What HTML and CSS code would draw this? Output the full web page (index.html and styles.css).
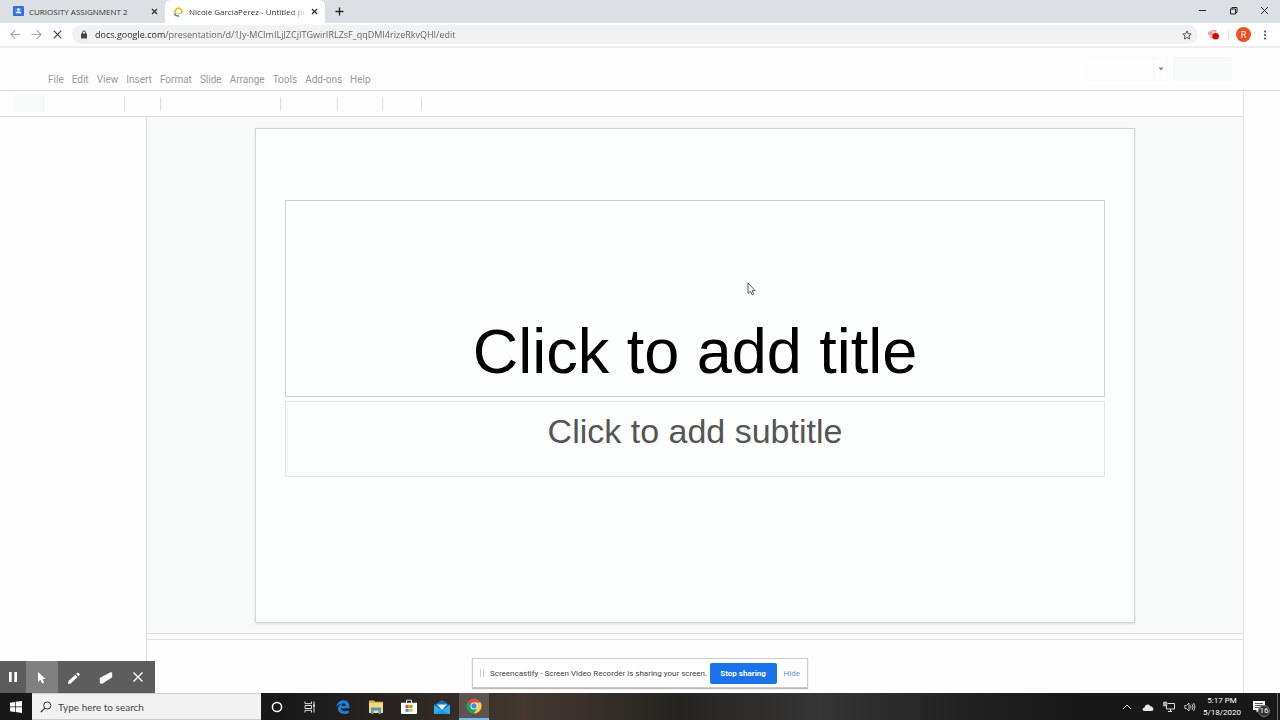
FILE: index.html
```
<!DOCTYPE html>
<html lang="en">
<head>
<meta charset="utf-8">
<title>Nicole GarciaPerez - Untitled presentation</title>
<link rel="stylesheet" href="styles.css">
</head>
<body>
<header class="tabstrip">
  <div class="tab">
    <svg class="favicon" viewBox="0 0 11 11"><rect width="11" height="10" y="0" rx="1" fill="#2f6fe0"/><rect x="2" y="2" width="7" height="6" fill="#4b86ee"/><circle cx="5.500" cy="3.600" r="1.300" fill="#fff"/><path d="M2.800 7.300c0-2.500 5.400-2.500 5.400 0z" fill="#fff"/></svg>
    <span class="tab-name">CURIOSITY ASSIGNMENT 2</span>
    <button class="tab-close" aria-label="Close tab"><svg viewBox="0 0 7 7"><path d="M1 1l5 5M6 1l-5 5" stroke="#333" stroke-width="1.300"/></svg></button>
  </div>
  <div class="tab tab-active">
    <svg class="favicon" viewBox="0 0 11 11"><path d="M3 7.500A3.200 3.200 0 1 1 8 7.500" fill="none" stroke="#f2b92c" stroke-width="1.800"/><path d="M3.500 6.800h4.500v1.700h-4.500z" fill="#f6cf63"/><path d="M1.200 7.500c.8 1.900 2.500 2.700 5 2.500" fill="none" stroke="#4a8ad4" stroke-width="1.600"/></svg>
    <span class="tab-name tab-fade">Nicole GarciaPerez - Untitled pre</span>
    <button class="tab-close" aria-label="Close tab"><svg viewBox="0 0 7 7"><path d="M1 1l5 5M6 1l-5 5" stroke="#333" stroke-width="1.300"/></svg></button>
  </div>
  <button class="new-tab" aria-label="New tab"><svg viewBox="0 0 9 9"><path d="M4.500 .5v8M.5 4.500h8" stroke="#222" stroke-width="1.300"/></svg></button>
  <div class="window-buttons">
    <button aria-label="Minimize"><svg viewBox="0 0 9 9"><path d="M1 4.500h7" stroke="#222"/></svg></button>
    <button aria-label="Restore"><svg viewBox="0 0 9 9"><path d="M1.500 3h5v5h-5zM3 3V1.500h5v5H6.500" fill="none" stroke="#222"/></svg></button>
    <button aria-label="Close"><svg viewBox="0 0 9 9"><path d="M1 1l7 7M8 1L1 8" stroke="#222"/></svg></button>
  </div>
</header>
<nav class="addressbar">
  <button class="nav-button" aria-label="Back"><svg viewBox="0 0 11 11"><path d="M10.500 5.500H1M5.200 1.200L1 5.500l4.200 4.300" fill="none" stroke="#aaa" stroke-width="1.200"/></svg></button>
  <button class="nav-button" aria-label="Forward"><svg viewBox="0 0 11 11"><path d="M.5 5.500H10M5.800 1.200L10 5.500 5.800 9.800" fill="none" stroke="#aaa" stroke-width="1.200"/></svg></button>
  <button class="nav-button" aria-label="Stop loading"><svg viewBox="0 0 11 11"><path d="M1.700 1.700l7.600 7.600M9.300 1.700L1.700 9.300" stroke="#444" stroke-width="1.200"/></svg></button>
  <div class="omnibox">
    <svg class="lock" viewBox="0 0 8 9"><rect x="1" y="3.500" width="6" height="5" rx=".6" fill="#444"/><path d="M2.500 4V2.400a1.500 1.500 0 0 1 3 0V4" fill="none" stroke="#444"/></svg>
    <input class="url" type="text" aria-label="Address" value="docs.google.com/presentation/d/1Jy-MCImILjJZCjITGwirIRLZsF_qqDMI4rizeRkvQHI/edit">
    <button class="star" aria-label="Bookmark"><svg viewBox="0 0 10 10"><path d="M5 .9l1.200 2.800 3 .3-2.300 2 .7 3L5 7.400 2.400 9l.7-3L.8 4l3-.3z" fill="none" stroke="#444" stroke-width=".9"/></svg></button>
  </div>
  <button class="extension" aria-label="Screencastify"><svg viewBox="0 0 12 12"><rect x="1" y="3" width="4" height="4" rx="1" fill="#f0a0a0"/><path d="M4 2.500h4v3H5v3H2.500" fill="none" stroke="#ee9a9a" stroke-width="1.300"/><circle cx="8" cy="7.600" r="3" fill="#e60000"/></svg></button>
  <span class="extension-rule"></span>
  <button class="avatar">R</button>
  <button class="more" aria-label="More"><svg viewBox="0 0 4 10"><circle cx="2" cy="1.500" r="1" fill="#444"/><circle cx="2" cy="5" r="1" fill="#444"/><circle cx="2" cy="8.500" r="1" fill="#444"/></svg></button>
</nav>
<section class="doc-header">
  <div class="menus">
    <button>File</button><button>Edit</button><button>View</button><button>Insert</button><button>Format</button><button>Slide</button><button>Arrange</button><button>Tools</button><button>Add-ons</button><button>Help</button>
  </div>
  <div class="doc-actions">
    <button class="present" aria-label="Present"></button>
    <button class="present-options" aria-label="Present options"><svg viewBox="0 0 6 4"><path d="M.5 .5h5L3 3.500z" fill="#888"/></svg></button>
    <button class="share" aria-label="Share"></button>
  </div>
</section>
<div class="workspace">
  <div class="editor">
    <div class="toolbar">
      <span class="group group-new"><button class="new-slide" aria-label="New slide"></button></span>
      <span class="group group-zoom"></span>
      <span class="group group-insert"></span>
      <span class="group group-layout"></span>
      <span class="group group-theme"></span>
      <span class="group group-motion"></span>
    </div>
    <div class="panes">
      <aside class="filmstrip"></aside>
      <div class="stage">
        <main class="canvas">
          <article class="slide">
            <h1 class="slide-title">Click to add title</h1>
            <h2 class="slide-subtitle">Click to add subtitle</h2>
          </article>
        </main>
        <div class="splitter"></div>
        <div class="notes"></div>
      </div>
    </div>
  </div>
  <aside class="side-panel"></aside>

  <div class="record-tools">
    <button aria-label="Pause"><svg viewBox="0 0 14 14"><path d="M3 2h2.700v10H3zM8.300 2H11v10H8.300z" fill="#fff"/></svg></button>
    <button class="selected" aria-label="Mouse"><svg viewBox="0 0 14 14"><path d="M3 2v10l2.400-2.200L7.200 13.500l1.900-.9-1.700-3.500h3.200z" fill="#fff"/></svg></button>
    <button aria-label="Pen"><svg viewBox="0 0 14 14"><path d="M1 14l.5-3 6.800-6.300 2.200 2.200-6.700 6.600zM9.200 4l1.600-1.500 2.200 2.100-1.600 1.600z" fill="#fff"/></svg></button>
    <button aria-label="Eraser"><svg viewBox="0 0 14 14"><path d="M.8 8L11.500 2.200l1.700.3v4.800L2.800 14 .8 13z" fill="#fff"/></svg></button>
    <button aria-label="Close tools"><svg viewBox="0 0 14 14"><path d="M2.500 2.500l9 9M11.500 2.500l-9 9" stroke="#fff" stroke-width="1.400"/></svg></button>
  </div>
  <div class="share-notice">
    <span class="grip"></span>
    <span class="share-text">Screencastify - Screen Video Recorder is sharing your screen.</span>
    <button class="stop">Stop sharing</button>
    <a class="hide" href="#">Hide</a>
  </div>
</div>
<footer class="taskbar">
  <button class="start" aria-label="Start"><svg viewBox="0 0 12 12"><path d="M0 1.700l5-.8v4.700H0zM5.700 .8L12 0v5.600H5.700zM0 6.300h5V11l-5-.8zM5.700 6.300H12V12l-6.300-.9z" fill="#fff"/></svg></button>
  <div class="search">
    <label for="search" aria-label="Search"><svg viewBox="0 0 12 12"><circle cx="7.300" cy="4.500" r="3.600" fill="none" stroke="#333"/><path d="M4.800 7.200L.8 11.200" stroke="#333" stroke-width="1.200"/></svg></label>
    <input id="search" type="text" placeholder="Type here to search">
  </div>
  <div class="apps">
    <button aria-label="Cortana"><svg viewBox="0 0 16 16"><circle cx="8" cy="8" r="4.600" fill="none" stroke="#fff" stroke-width="1.500"/></svg></button>
    <button aria-label="Task view"><svg viewBox="0 0 16 16"><path d="M3 2.500v2.200h6.500V2.500M3 13.500v-2.200h6.500v2.200M3 6.500h6.500v3H3zM12 2.500v11" fill="none" stroke="#ddd"/><path d="M11 5.500h2v2h-2z" fill="#ddd"/></svg></button>
    <button aria-label="Edge"><svg viewBox="0 0 16 16"><path d="M1.500 8C2 3.800 4.800 1.200 8.500 1.200c4 0 6 3 6 6.500v1.500H6c.2 2.200 2 3 3.900 3 1.500 0 2.700-.4 3.800-1V14c-1.300.7-2.800 1-4.500 1C5.500 15 3 13 3 9.800 3 7.600 4.200 6 6 5c-2 .3-3.500 1.300-4.500 3zM6.200 6.800h4.600c0-1.600-.8-2.500-2.200-2.500S6.400 5.300 6.200 6.800z" fill="#1583dc"/></svg></button>
    <button aria-label="File Explorer"><svg viewBox="0 0 16 16"><path d="M1 1.500h5l1 1.300h8V14H1z" fill="#e5b548"/><path d="M1 4h14v10H1z" fill="#f8da7c"/><path d="M3 15V8.500h10V15h-2.500v-3.500h-5V15z" fill="#4e9bc4"/></svg></button>
    <button aria-label="Store"><svg viewBox="0 0 16 16"><path d="M5.500 4V1.200h5V4" fill="none" stroke="#ddd"/><path d="M0 3.700h16V14q0 1-1 1H1q-1 0-1-1z" fill="#fff"/><path d="M4.500 5.800h3.200V9H4.500z" fill="#e8502a"/><path d="M8.300 5.800h3.200V9H8.300z" fill="#7db928"/><path d="M4.500 9.700h3.200v3.100H4.500z" fill="#2a9fe0"/><path d="M8.300 9.700h3.200v3.100H8.300z" fill="#f5b81c"/></svg></button>
    <button aria-label="Mail"><svg viewBox="0 0 16 16"><path d="M0 6l8-5 8 5v9H0z" fill="#1370bd"/><path d="M0 6l8 5.500L16 6v9H0z" fill="#38aeea"/><path d="M3 5.500h10L8 11z" fill="#e5f2fa"/><path d="M0 15l8-4.500L16 15z" fill="#239ae0"/></svg></button>
    <button class="running" aria-label="Chrome"><svg viewBox="0 0 16 16"><circle cx="8" cy="8" r="7.500" fill="#dd4b3e"/><path d="M1.500 4.250A7.500 7.500 0 0 0 8 15.500l3.300-5.600L8 8z" fill="#1da462"/><path d="M8 15.500A7.500 7.500 0 0 0 14.600 4.400H8V8l3.300 2z" fill="#fdd043"/><circle cx="8" cy="8" r="3.500" fill="#fff"/><circle cx="8" cy="8" r="2.700" fill="#4a87ee"/></svg></button>
  </div>
  <div class="tray">
    <button aria-label="Hidden icons"><svg viewBox="0 0 12 12"><path d="M2 8l4-4 4 4" fill="none" stroke="#ddd"/></svg></button>
    <button aria-label="OneDrive"><svg viewBox="0 0 12 12"><path d="M2.500 10C-.3 10 .2 6.500 2.500 6.400 3 3 7.300 2.500 8.300 5.300c3-.2 4.500 4.700 1.200 4.700z" fill="#e6e6e6"/></svg></button>
    <button aria-label="Network"><svg viewBox="0 0 12 12"><path d="M4.500 2.500h7v5.500H3.500V5M5 10.500h4M7.500 8v2.500" fill="none" stroke="#ddd"/><path d="M.5 1h3.300v4H.5z" fill="#aaa" stroke="#ddd" stroke-width=".6"/></svg></button>
    <button aria-label="Volume"><svg viewBox="0 0 12 12"><path d="M.8 4.500h1.700L5 2v8L2.500 7.500H.8z" fill="none" stroke="#ddd" stroke-width=".9"/><path d="M6.500 4.500q1 1.500 0 3M8 3.200q2 2.800 0 5.600M9.600 2q2.800 4 0 8" fill="none" stroke="#ddd" stroke-width=".9"/></svg></button>
  </div>
  <time class="clock"><span>5:17 PM</span><span>5/18/2020</span></time>
  <button class="alerts" aria-label="Notifications"><svg viewBox="0 0 12 12"><path d="M0 0h12v9H6L3.500 11.500V9H0z" fill="#fff"/><path d="M2 2.500h8M2 4.500h8M2 6.500h5" stroke="#333" stroke-width=".8"/></svg><span class="badge">16</span></button>
  <span class="show-desktop"></span>
</footer>
<svg class="pointer" viewBox="0 0 9 14"><path d="M1 1v10.500l2.500-2.300 1.700 3.700 1.500-.7L5.100 8.600h3z" fill="#fff" stroke="#333" stroke-width=".8"/></svg>
</body>
</html>
```
FILE: styles.css
```
* { box-sizing: border-box; }
body {
  margin: 0;
  min-height: 100vh;
  display: flex;
  flex-direction: column;
  position: relative;
  background: #fefefe;
  font-family: "Open Sans", "Noto Sans", sans-serif;
  font-size: 9px;
  color: #444;
}
button {
  display: flex;
  align-items: center;
  justify-content: center;
  padding: 0;
  border: 0;
  background: none;
  font: inherit;
  color: inherit;
}
input { min-width: 0; padding: 0; border: 0; outline: 0; background: none; font: inherit; }
svg { display: block; flex: none; }

.tabstrip { display: flex; height: 23px; background: #dcdfe4; font-size: 8px; }
.tab { display: flex; align-items: center; width: 165px; padding: 0 7px 0 13px; color: #333; }
.tab-active { width: 160px; padding-left: 8px; border-radius: 6px 6px 0 0; background: #fff; }
.favicon { width: 11px; height: 11px; margin-right: 5px; }
.tab-name { flex: 1; min-width: 0; white-space: nowrap; }
.tab-fade { mask-image: linear-gradient(to right, #000 85%, rgba(0, 0, 0, 0.2)); }
.tab-close { width: 8px; margin-left: 6px; }
.tab-close svg { width: 7px; height: 7px; }
.new-tab { width: 28px; }
.new-tab svg { width: 9px; height: 9px; }
.window-buttons { display: flex; margin-left: auto; }
.window-buttons button { width: 31px; height: 20px; }
.window-buttons svg { width: 9px; height: 9px; }

.addressbar { display: flex; align-items: center; height: 25px; padding: 0 8px; border-bottom: 2px solid #eee; background: #fff; }
.nav-button { width: 21px; height: 20px; padding-right: 7px; }
.nav-button svg { width: 11px; height: 11px; }
.omnibox { display: flex; flex: 1; align-items: center; height: 19px; margin-left: 1px; padding: 0 6px 0 8px; border-radius: 10px; background: #f1f3f3; }
.lock { width: 8px; height: 9px; margin-right: 7px; }
.url {
  flex: 1;
  background: linear-gradient(to right, #222 70px, #5c6062 70px);
  background-clip: text;
  -webkit-text-fill-color: transparent;
}
.star svg { width: 10px; height: 10px; }
.extension { margin-left: 9px; }
.extension svg { width: 13px; height: 13px; }
.extension-rule { width: 1px; height: 10px; margin: 0 7px 0 8px; background: #ddd; }
.avatar { width: 15px; height: 15px; border-radius: 50%; background: #ee4f1c; color: #fff; font-family: Roboto, sans-serif; font-size: 9px; }
.more { width: 14px; margin-left: 7px; }
.more svg { width: 4px; height: 10px; }

.doc-header { display: flex; justify-content: space-between; height: 43px; padding: 0 48px 0 48px; border-bottom: 1px solid #dcdcdc; }
.menus { display: flex; gap: 8px; align-self: flex-end; margin-bottom: 4px; font-family: Roboto, sans-serif; font-size: 10px; line-height: 12px; color: #999; }
.doc-actions { display: flex; align-items: center; height: 42px; }
.present, .present-options { height: 24px; border: 1px solid #fafafa; }
.present { width: 68px; }
.present-options { width: 14px; }
.present-options svg { width: 6px; height: 4px; }
.share { width: 59px; height: 24px; margin-left: 5px; border-radius: 2px; background: #f8f9f9; }

.workspace { display: flex; flex: 1; position: relative; }
.editor { display: flex; flex: 1; flex-direction: column; min-width: 0; }
.side-panel { width: 37px; border-left: 1px solid #e6e6e6; }
.toolbar { display: flex; align-items: center; height: 26px; border-bottom: 1px solid #dcdcdc; }
.group { height: 14px; border-right: 1px solid #ddd; }
.group-new { display: flex; align-items: center; width: 125px; padding-left: 15px; }
.new-slide { width: 30px; height: 17px; background: #f8f9f9; }
.group-zoom { width: 36px; }
.group-insert { width: 120px; }
.group-layout { width: 57px; }
.group-theme { width: 45px; }
.group-motion { width: 39px; }
.panes { display: flex; flex: 1; }
.filmstrip { width: 147px; border-right: 1px solid #dcdcdc; }
.stage { display: flex; flex: 1; flex-direction: column; }
.canvas { padding: 11px 108px 10px; background: #f8f9f9; }
.slide {
  display: flex;
  flex-direction: column;
  gap: 4px;
  aspect-ratio: 16 / 9;
  padding: 71px 29px 0;
  border: 1px solid #d4d6d6;
  background: #fdfefe;
  box-shadow: 0 1px 2px #ddd;
  font-family: "Liberation Sans", Arial, sans-serif;
  text-align: center;
}
.slide-title, .slide-subtitle { margin: 0; font-weight: 400; }
.slide-title { display: flex; align-items: flex-end; justify-content: center; height: 197px; padding-bottom: 9px; border: 1px solid #d0d0d0; font-size: 63px; line-height: 72px; color: #000; }
.slide-subtitle { height: 76px; padding-top: 9px; border: 1px solid #e4e4e4; font-size: 34px; line-height: 40px; color: #555; }
.splitter { height: 7px; border-top: 1px solid #dfdfdf; border-bottom: 1px solid #dfdfdf; }
.notes { flex: 1; }

.record-tools { display: flex; position: absolute; bottom: 0; left: 0; height: 32px; padding-right: 1px; background: #5d5d5d; }
.record-tools button { width: 32px; }
.record-tools button:first-child { width: 26px; }
.record-tools .selected { background: #808080; }
.record-tools svg { width: 14px; height: 14px; }
.share-notice { display: flex; align-items: center; position: absolute; bottom: 5px; left: 50%; width: 336px; height: 30px; padding: 0 7px; transform: translateX(-50%); border: 1px solid #ccc; background: #fff; box-shadow: 0 1px 1px #bbb; font-family: Roboto, sans-serif; font-size: 8px; white-space: nowrap; }
.grip { width: 4px; height: 8px; margin-right: 6px; border: solid #ccc; border-width: 0 1px; }
.stop { flex: none; width: 67px; height: 21px; margin-left: auto; border-radius: 2px; background: #1a73e8; color: #fff; font-weight: 700; }
.hide { margin-left: 7px; color: #5a8fd8; text-decoration: none; }

.taskbar { display: flex; height: 27px; background: linear-gradient(to right, #181818 22%, #332b26 35%, #443830 41%, #262522 53%, #353535 64%, #202020 76%, #181818 84%); color: #fff; }
.start { width: 32px; }
.start svg { width: 12px; height: 12px; }
.search { display: flex; align-items: center; width: 229px; padding-left: 8px; border: solid #ccc; border-width: 1px 0; background: #f2f2f2; }
.search svg { width: 12px; height: 12px; }
.search input { flex: 1; margin-left: 6px; font-family: Lato, "Open Sans", sans-serif; font-size: 10px; }
.search input::placeholder { color: #444; }
.apps { display: flex; }
.apps button { width: 33px; padding-right: 1px; }
.apps svg { width: 16px; height: 16px; }
.apps .running { width: 30px; padding: 0; border-bottom: 2px solid #76b9ed; background: #5c544d; }
.tray { display: flex; margin-left: auto; }
.tray button { width: 21px; }
.tray svg { width: 12px; height: 12px; }
.clock { display: flex; flex-direction: column; justify-content: center; width: 44px; font-family: Roboto, sans-serif; font-size: 8px; line-height: 12px; text-align: center; white-space: nowrap; }
.alerts { position: relative; width: 33px; padding-right: 4px; }
.alerts svg { width: 12px; height: 12px; }
.badge { position: absolute; right: 7px; bottom: 3px; width: 12px; height: 12px; border: 1px solid #777; border-radius: 50%; background: #333; font-family: Roboto, sans-serif; font-size: 8px; line-height: 10px; text-align: center; }
.show-desktop { width: 3px; border-left: 1px solid #666; }
.pointer { position: absolute; top: 282px; left: 747px; width: 9px; height: 14px; }
```
